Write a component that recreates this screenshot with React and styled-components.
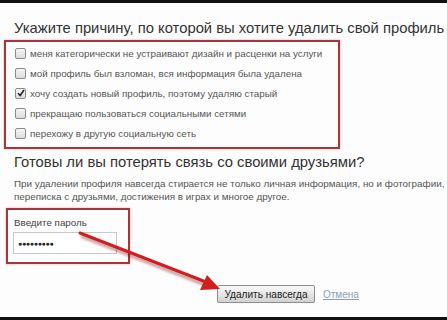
import React from "react";
import styled, { createGlobalStyle } from "styled-components";

const GlobalStyle = createGlobalStyle`
  html, body {
    margin: 0;
    padding: 0;
    background: #fff;
  }
  body {
    font-family: "Liberation Sans", Arial, sans-serif;
  }
`;

const Page = styled.div`
  width: 447px;
  height: 320px;
  display: flex;
  flex-direction: column;
  overflow: hidden;
  background: #fdfdfd;
`;

const EdgeBar = styled.div`
  height: ${(p) => p.h}px;
  background: #111;
  flex: none;
`;

const Content = styled.div`
  position: relative;
  flex: 1;
  padding: 15px 0 0 4px;
`;

const Title = styled.h2`
  margin: 0 0 0 10px;
  font-size: 14.8px;
  line-height: 20px;
  font-weight: normal;
  color: #333;
  white-space: nowrap;
`;

const RedFrame = styled.div`
  border: 2px solid #a8343c;
  box-shadow: 0 0 2px rgba(200, 80, 80, 0.5);
  width: ${(p) => p.w}px;
  box-sizing: border-box;
  margin-left: ${(p) => p.ml || 0}px;
`;

const Reasons = styled(RedFrame)`
  padding: 1px 0 4px 9px;
  margin: 2px 0 3px;
`;

const Option = styled.label`
  display: flex;
  align-items: center;
  height: 20px;
  gap: 4px;
  font-size: 9.8px;
  color: #555;
  white-space: nowrap;
`;

const Box = styled.span`
  width: 9px;
  height: 9px;
  border: 1px solid #8a8a8a;
  border-radius: 2px;
  background: linear-gradient(#f4f4f4, #dcdcdc);
  display: flex;
  align-items: center;
  justify-content: center;
  flex: none;
`;

const Paragraph = styled.p`
  margin: 6px 0 0 10px;
  font-size: 9.85px;
  line-height: 12.5px;
  color: #555;
  white-space: nowrap;
`;

const PasswordFrame = styled(RedFrame)`
  margin-top: 5px;
  height: 56px;
  padding: 6px 0 0 5px;
`;

const FieldLabel = styled.div`
  font-size: 9.8px;
  color: #444;
  line-height: 13px;
  margin-left: 1px;
`;

const PasswordInput = styled.div`
  margin-top: 3px;
  width: 104px;
  height: 22px;
  box-sizing: border-box;
  border: 1px solid #c8c8c8;
  background: #fff;
  padding: 0 4px;
  display: flex;
  align-items: center;
  font-size: 7px;
  letter-spacing: -0.3px;
  color: #222;
`;

const Actions = styled.div`
  display: flex;
  align-items: center;
  gap: 8px;
  margin: 21px 0 0 213px;
`;

const Button = styled.button`
  height: 18px;
  width: 98px;
  padding: 0;
  border: 1px solid #8e8e8e;
  border-radius: 2px;
  background: linear-gradient(#fafafa, #d2d2d2);
  font-family: "Liberation Sans", Arial, sans-serif;
  font-size: 10.1px;
  color: #222;
`;

const CancelLink = styled.a`
  font-size: 10px;
  color: #8aa0b8;
  text-decoration: underline;
`;

const Arrow = styled.svg`
  position: absolute;
  left: 0;
  top: 0;
  pointer-events: none;
`;

const reasons = [
  "меня категорически не устраивают дизайн и расценки на услуги",
  "мой профиль был взломан, вся информация была удалена",
  "хочу создать новый профиль, поэтому удаляю старый",
  "прекращаю пользоваться социальными сетями",
  "перехожу в другую социальную сеть",
];

const Check = () => (
  <svg width="8" height="8" viewBox="0 0 8 8">
    <path d="M1 4.2 L3.2 6.5 L7 1" fill="none" stroke="#222" strokeWidth="1.6" />
  </svg>
);

export default function App() {
  return (
    <Page>
      <GlobalStyle />
      <EdgeBar h={3} />
      <Content>
        <Title>Укажите причину, по которой вы хотите удалить свой профиль</Title>
        <Reasons w={336}>
          {reasons.map((r, i) => (
            <Option key={r}>
              <Box>{i === 2 && <Check />}</Box>
              {r}
            </Option>
          ))}
        </Reasons>
        <Title>Готовы ли вы потерять связь со своими друзьями?</Title>
        <Paragraph>
          При удалении профиля навсегда стирается не только личная информация, но и фотографии, и
          <br />
          переписка с друзьями, достижения в играх и многое другое.
        </Paragraph>
        <PasswordFrame w={124} ml={2}>
          <FieldLabel>Введите пароль</FieldLabel>
          <PasswordInput>●●●●●●●●●</PasswordInput>
        </PasswordFrame>
        <Actions>
          <Button>Удалить навсегда</Button>
          <CancelLink href="#">Отмена</CancelLink>
        </Actions>
        <Arrow width="447" height="317" viewBox="0 0 447 317">
          <defs>
            <filter id="sh" x="-10%" y="-10%" width="120%" height="120%">
              <feGaussianBlur stdDeviation="1.2" />
            </filter>
          </defs>
          <g transform="translate(0,-3)">
            <path d="M80 234 L205 283" stroke="rgba(120,0,0,0.35)" strokeWidth="4" filter="url(#sh)" transform="translate(1,2)" />
            <path d="M80 233 L206 282" stroke="#cf1f1f" strokeWidth="3" strokeLinecap="round" />
            <path d="M220 289 L200 290 L207 275 Z" fill="#cf1f1f" />
          </g>
        </Arrow>
      </Content>
      <EdgeBar h={3} />
    </Page>
  );
}
